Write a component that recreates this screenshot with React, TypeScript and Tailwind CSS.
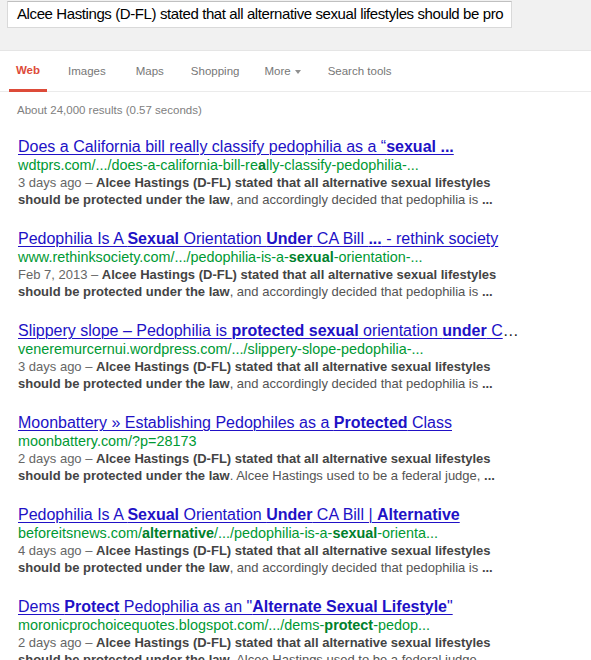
import React from "react";

type Seg = { t: string; b?: boolean };

const B = (t: string): Seg => ({ t, b: true });
const N = (t: string): Seg => ({ t });

type Result = {
  title: Seg[];
  url: Seg[];
  date: string;
  line1: Seg[];
  line2: Seg[];
};

const common1: Seg[] = [B("Alcee Hastings (D-FL) stated that all alternative sexual lifestyles")];
const commonA: Seg[] = [B("should be protected under the law"), N(", and accordingly decided that pedophilia is "), B("...")];
const commonB: Seg[] = [B("should be protected under the law"), N(". Alcee Hastings used to be a federal judge, "), B("...")];

const results: Result[] = [
  {
    title: [N("Does a California bill really classify pedophilia as a “"), B("sexual ...")],
    url: [N("wdtprs.com/.../does-a-california-bill-re"), B("a"), N("lly-classify-pedophilia-...")],
    date: "3 days ago",
    line1: common1,
    line2: commonA,
  },
  {
    title: [N("Pedophilia Is A "), B("Sexual"), N(" Orientation "), B("Under"), N(" CA Bill "), B("..."), N(" - rethink society")],
    url: [N("www.rethinksociety.com/.../pedophilia-is-a-"), B("sexual"), N("-orientation-...")],
    date: "Feb 7, 2013",
    line1: common1,
    line2: commonA,
  },
  {
    title: [N("Slippery slope – Pedophilia is "), B("protected sexual"), N(" orientation "), B("under"), N(" C")],
    url: [N("veneremurcernui.wordpress.com/.../slippery-slope-pedophilia-...")],
    date: "3 days ago",
    line1: common1,
    line2: commonA,
  },
  {
    title: [N("Moonbattery » Establishing Pedophiles as a "), B("Protected"), N(" Class")],
    url: [N("moonbattery.com/?p=28173")],
    date: "2 days ago",
    line1: common1,
    line2: commonB,
  },
  {
    title: [N("Pedophilia Is A "), B("Sexual"), N(" Orientation "), B("Under"), N(" CA Bill | "), B("Alternative")],
    url: [N("beforeitsnews.com/"), B("alternative"), N("/.../pedophilia-is-a-"), B("sexual"), N("-orienta...")],
    date: "4 days ago",
    line1: common1,
    line2: commonA,
  },
  {
    title: [N("Dems "), B("Protect"), N(" Pedophilia as an \""), B("Alternate Sexual Lifestyle"), N("\"")],
    url: [N("moronicprochoicequotes.blogspot.com/.../dems-"), B("protect"), N("-pedop...")],
    date: "2 days ago",
    line1: common1,
    line2: commonB,
  },
];

function Segs({ segs, boldClass = "font-bold" }: { segs: Seg[]; boldClass?: string }) {
  return (
    <>
      {segs.map((s, i) =>
        s.b ? (
          <b key={i} className={boldClass}>
            {s.t}
          </b>
        ) : (
          <span key={i}>{s.t}</span>
        )
      )}
    </>
  );
}

export default function App() {
  return (
    <div
      className="w-[591px] h-[660px] overflow-hidden bg-white"
      style={{ fontFamily: '"Liberation Sans", Arial, sans-serif' }}
    >
      <div className="h-[51px] bg-[#f1f1f1] border-b border-[#e5e5e5] pt-px">
        <div className="ml-[7px] w-[505px] h-[27px] bg-white border border-[#d9d9d9] border-t-[#c0c0c0] flex items-center pl-[9px] overflow-hidden whitespace-nowrap text-[15px] tracking-[-0.4px] text-black">
          Alcee Hastings (D-FL) stated that all alternative sexual lifestyles should be pro
        </div>
      </div>
      <div className="h-[41px] border-b border-[#ebebeb] flex items-stretch text-[11.5px] text-[#777] relative">
        <div className="ml-[9px] w-[38px] flex items-center justify-center pt-[1px] font-bold text-[#dd4b39] border-b-[3px] border-[#dd4b39] mb-[-1px]">
          Web
        </div>
        <div className="ml-[21px] flex items-center pt-[1px]">Images</div>
        <div className="ml-[30px] flex items-center pt-[1px]">Maps</div>
        <div className="ml-[27px] flex items-center pt-[1px]">Shopping</div>
        <div className="ml-[25px] flex items-center pt-[1px]">
          More
          <span className="ml-[4px] w-0 h-0 border-l-[3.5px] border-r-[3.5px] border-t-[4px] border-l-transparent border-r-transparent border-t-[#909090]"></span>
        </div>
        <div className="ml-[27px] flex items-center pt-[1px]">Search tools</div>
      </div>
      <div className="pl-[17px] pt-[10px] h-[45px] text-[11.5px] text-[#808080]">About 24,000 results (0.57 seconds)</div>
      <div className="pl-[18px]">
        {results.map((r, i) => (
          <div key={i} className="mb-[21px]">
            <div className="h-[20px] text-[16px] leading-[20px] whitespace-nowrap">
              <a className="text-[#2111c6] underline decoration-1 underline-offset-[2px]">
                <Segs segs={r.title} />
              </a>
              {i === 2 && <span className="text-[#222]">…</span>}
            </div>
            <div className="h-[16px] text-[14.4px] leading-[16px] text-[#009933] whitespace-nowrap">
              <Segs segs={r.url} boldClass="font-bold text-[#00802b]" />
            </div>
            <div className="text-[13px] leading-[17px] text-[#545454] whitespace-nowrap pt-px">
              <div className="h-[17px]">
                <span className="text-[#666]">{r.date} – </span>
                <Segs segs={r.line1} boldClass="font-bold text-[#444]" />
              </div>
              <div className="h-[17px]">
                <Segs segs={r.line2} boldClass="font-bold text-[#444]" />
              </div>
            </div>
          </div>
        ))}
      </div>
    </div>
  );
}
